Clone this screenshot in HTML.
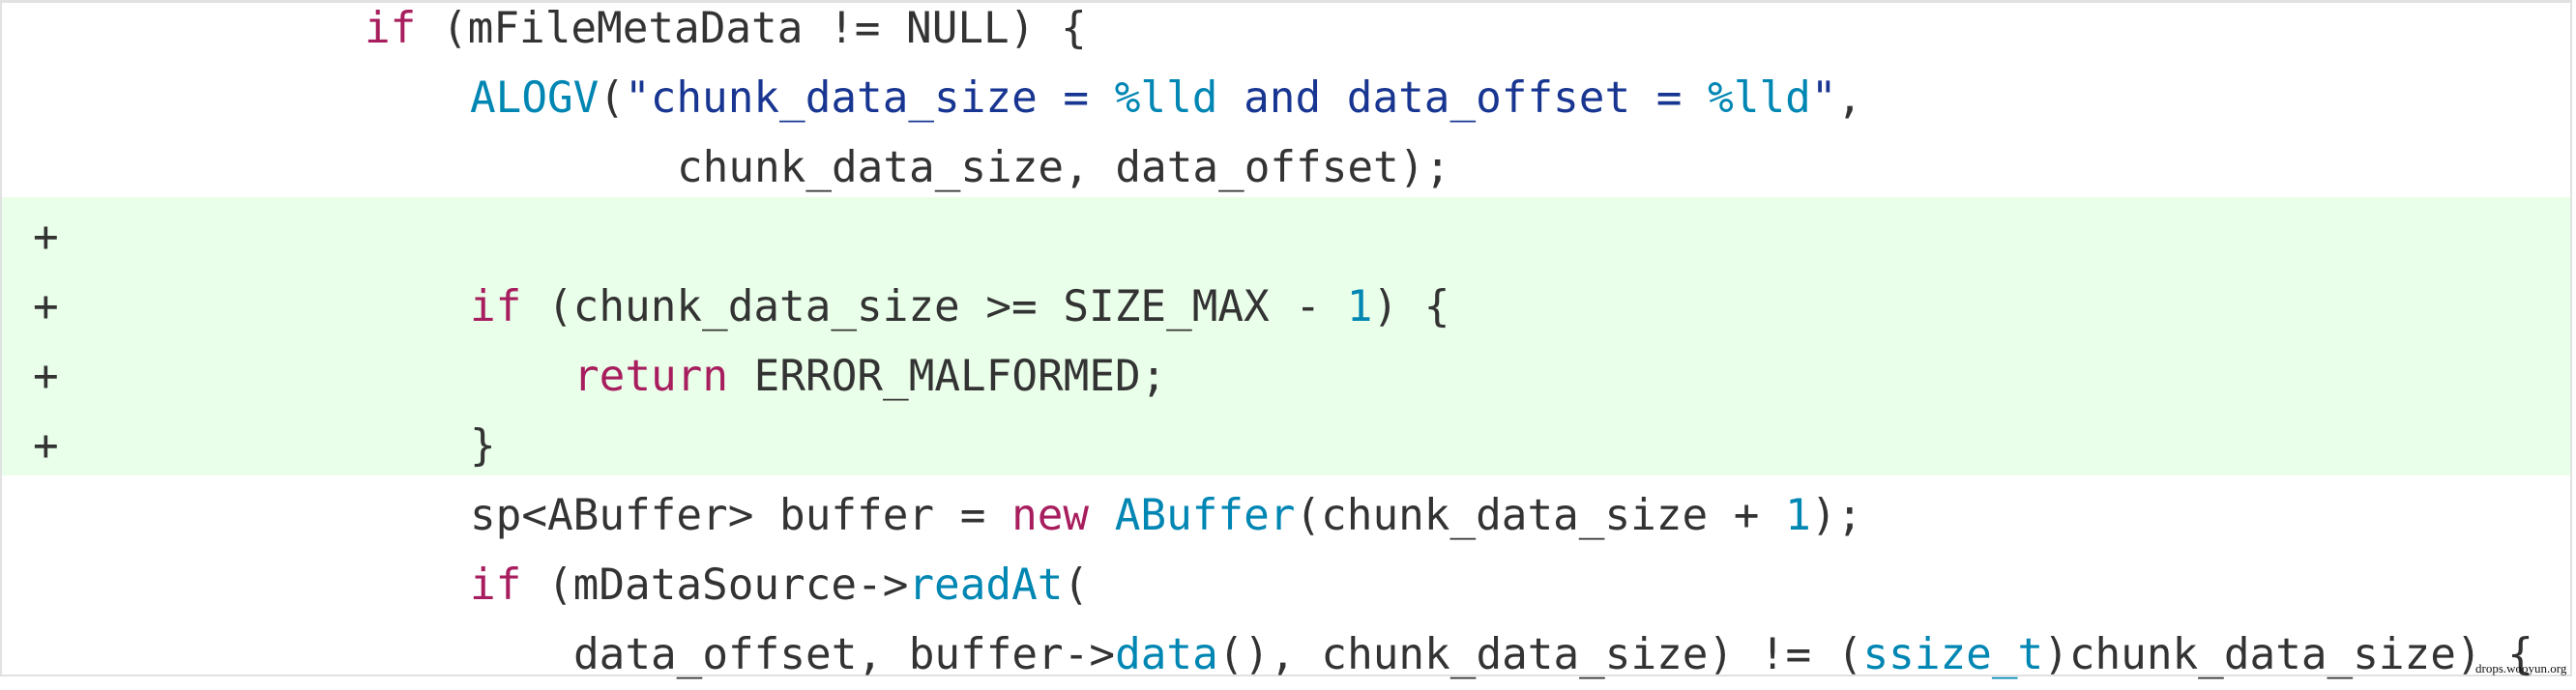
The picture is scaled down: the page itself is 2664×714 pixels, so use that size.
<!DOCTYPE html>
<html><head><meta charset="utf-8"><style>
html,body{margin:0;padding:0;background:#fff;}
body{width:2664px;height:704px;position:relative;overflow:hidden;}
.frame{position:absolute;left:0;top:0;width:2660px;height:700px;border:2px solid #e1e1e1;border-top-width:3px;box-sizing:border-box;}
.g{position:absolute;left:2px;top:204px;width:2656px;height:288px;background:#eaffea;}
.l{position:absolute;left:0;height:72px;line-height:72px;font-family:"DejaVu Sans Mono","Liberation Mono",monospace;font-size:44.3px;color:#333;white-space:pre;}
.p{position:absolute;left:34px;height:72px;line-height:72px;font-family:"DejaVu Sans Mono","Liberation Mono",monospace;font-size:44.3px;color:#333;}
.k{color:#a71d5d}.f{color:#0086b3}.s{color:#183691}
.wm{position:absolute;left:2560px;top:684px;font-family:"Liberation Serif",serif;font-size:13px;color:#111;}
</style></head><body>
<div class="g"></div>
<div class="frame"></div>
<div class="l" style="top:-6px;left:377px"><span class="k">if</span> (mFileMetaData != NULL) {</div>
<div class="l" style="top:66px;left:486px"><span class="f">ALOGV</span>(<span class="s">"chunk_data_size = </span><span class="f">%lld</span><span class="s"> and data_offset = </span><span class="f">%lld</span><span class="s">"</span>,</div>
<div class="l" style="top:138px;left:700px">chunk_data_size, data_offset);</div>
<div class="p" style="top:210px">+</div>
<div class="p" style="top:282px">+</div>
<div class="l" style="top:282px;left:486px"><span class="k">if</span> (chunk_data_size &gt;= SIZE_MAX - <span class="f">1</span>) {</div>
<div class="p" style="top:354px">+</div>
<div class="l" style="top:354px;left:593px"><span class="k">return</span> ERROR_MALFORMED;</div>
<div class="p" style="top:426px">+</div>
<div class="l" style="top:426px;left:486px">}</div>
<div class="l" style="top:498px;left:486px">sp&lt;ABuffer&gt; buffer = <span class="k">new</span> <span class="f">ABuffer</span>(chunk_data_size + <span class="f">1</span>);</div>
<div class="l" style="top:570px;left:486px"><span class="k">if</span> (mDataSource-&gt;<span class="f">readAt</span>(</div>
<div class="l" style="top:642px;left:593px">data_offset, buffer-&gt;<span class="f">data</span>(), chunk_data_size) != (<span class="f">ssize_t</span>)chunk_data_size) {</div>
<div class="wm">drops.wooyun.org</div>
</body></html>
